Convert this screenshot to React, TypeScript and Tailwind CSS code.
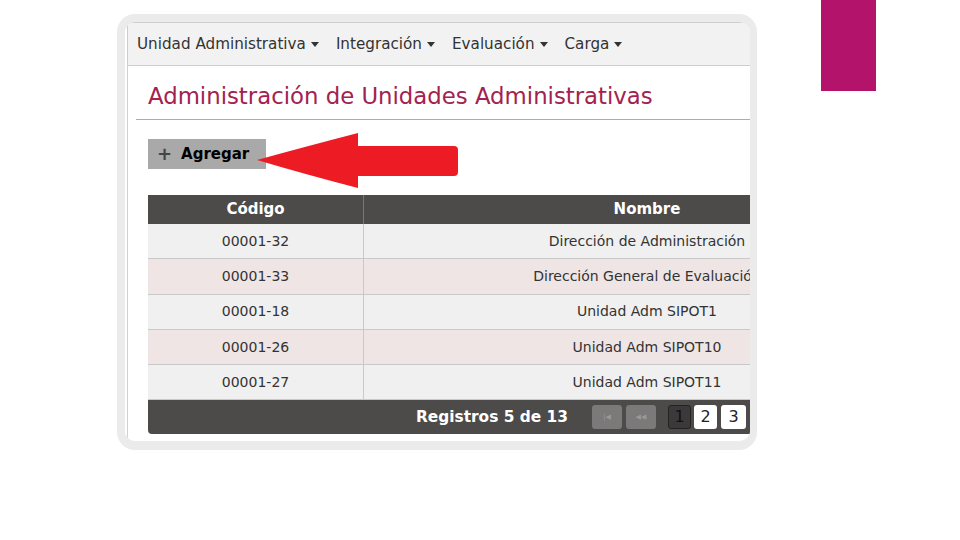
import React from "react";

const rows = [
  { code: "00001-32", name: "Dirección de Administración" },
  { code: "00001-33", name: "Dirección General de Evaluación" },
  { code: "00001-18", name: "Unidad Adm SIPOT1" },
  { code: "00001-26", name: "Unidad Adm SIPOT10" },
  { code: "00001-27", name: "Unidad Adm SIPOT11" },
];

const menu = ["Unidad Administrativa", "Integración", "Evaluación", "Carga"];

const Caret: React.FC = () => (
  <svg width="8" height="5" viewBox="0 0 8 5" className="ml-[5px] mt-[1px]">
    <path d="M0 0 L8 0 L4 5 Z" fill="#333" />
  </svg>
);

const App: React.FC = () => {
  return (
    <div className="relative w-[960px] h-[540px] bg-white overflow-hidden font-['DejaVu_Sans',sans-serif]">
      {/* slide accent */}
      <div className="absolute left-[821px] top-0 w-[55px] h-[91px] bg-[#b3136b]" />

      <div className="pt-[14px] pl-[117px]">
        <div className="relative w-[640px] h-[436px] border-8 border-r-[7px] border-b-[9px] border-[#ebebeb] rounded-[18px] bg-white overflow-hidden flex flex-col">
          {/* menu bar */}
          <div className="ml-[2px] h-[44px] shrink-0 bg-[#f2f2f2] border-l border-t border-b border-[#cdcdcd] rounded-tl-[4px] flex items-center pl-[9px] gap-[17px] text-[15.2px] text-[#333]">
            {menu.map((m) => (
              <div key={m} className="flex items-center">
                <span>{m}</span>
                <Caret />
              </div>
            ))}
          </div>

          {/* content */}
          <div className="ml-[2px] flex-1 border-l border-[#d0d0d0] pl-[8px] overflow-hidden">
            <h1 className="mt-[15px] pl-[12px] pb-[8px] border-b border-[#cf9ab1] text-[22.8px] leading-[30px] text-[#a3224f] whitespace-nowrap">
              Administración de Unidades Administrativas
            </h1>

            <div className="ml-[12px] mt-[19px] w-[118px] h-[30px] bg-[#a9a9a9] flex items-center pl-[9px] text-[15px] font-bold text-black">
              <span className="text-[#444] text-[18px] leading-none mr-[9px]">+</span>
              <span>Agregar</span>
            </div>

            <div className="ml-[12px] mt-[26px] w-[782px]">
              <div className="flex h-[29px] bg-[#4d4a4a] text-white text-[15px] font-bold">
                <div className="w-[216px] border-r border-[#777] flex items-center justify-center">Código</div>
                <div className="flex-1 flex items-center justify-center">Nombre</div>
              </div>
              {rows.map((r, i) => (
                <div
                  key={r.code}
                  className={
                    "flex h-[35.3px] text-[14px] text-[#333] border-b border-[#c9c9c9] " +
                    (i % 2 === 0 ? "bg-[#f0f0f0]" : "bg-[#efe5e5]")
                  }
                >
                  <div className="w-[216px] border-r border-[#c9c9c9] flex items-center justify-center">{r.code}</div>
                  <div className="flex-1 flex items-center justify-center whitespace-nowrap">{r.name}</div>
                </div>
              ))}
              <div className="w-[603px] h-[34px] bg-[#4d4a4a] rounded-bl-[4px] flex items-center justify-end pr-[5px]">
                <span className="text-white text-[15.4px] font-bold mr-[24px]">Registros 5 de 13</span>
                <div className="w-[30px] h-[24px] rounded-[3px] bg-[#7b7979] flex items-center justify-center text-[#999] text-[7px]">|◀</div>
                <div className="ml-[4px] w-[30px] h-[24px] rounded-[3px] bg-[#7b7979] flex items-center justify-center text-[#999] text-[7px]">◀◀</div>
                <div className="ml-[12px] w-[23px] h-[24px] rounded-[3px] bg-[#3b3939] border border-[#222] flex items-center justify-center text-[#111] text-[16px]">1</div>
                <div className="ml-[3px] w-[23px] h-[24px] rounded-[3px] bg-white flex items-center justify-center text-[#222] text-[16px]">2</div>
                <div className="ml-[4px] w-[25px] h-[24px] rounded-[3px] bg-white flex items-center justify-center text-[#222] text-[16px]">3</div>
              </div>
            </div>
          </div>
        </div>
      </div>

      {/* red arrow callout */}
      <svg className="absolute left-[254px] top-[130px]" width="208" height="62" viewBox="0 0 208 62">
        <path
          d="M3 30 Q50 17 104 3 L104 16 L200 16 Q204 16 204 20 L204 42 Q204 46 200 46 L104 46 L104 58 Q50 44 3 30 Z"
          fill="#ed1c24"
        />
      </svg>
    </div>
  );
};

export default App;
